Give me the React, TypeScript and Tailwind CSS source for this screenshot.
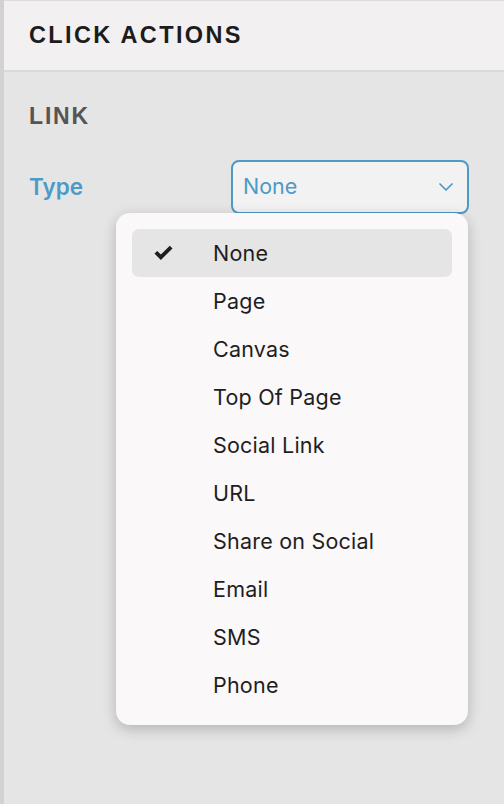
import { ChevronDown } from "lucide-react";

const OPTIONS = ["None", "Page", "Canvas", "Top Of Page", "Social Link", "URL", "Share on Social", "Email", "SMS", "Phone"];

export default function App() {
  const selected = "None";

  return (
    <main className="flex h-[804px] w-[504px] overflow-hidden bg-[#e5e5e5] font-['Inter',sans-serif]">
      <div className="w-[4px] shrink-0 bg-[#d2d2d2]" />
      <div className="relative flex min-w-0 flex-1 flex-col">
        <header className="flex h-[72px] items-center border-t border-b-2 border-t-[#dcdcdc] border-b-[#d9d9d9] bg-[#f2f0f1] px-[25px]">
          <h1 className="font-['Liberation_Sans',Arial,sans-serif] text-[23.5px] font-bold tracking-[0.1em] text-[#1c1c1c]">
            CLICK ACTIONS
          </h1>
        </header>

        <section className="px-[25px] pt-[27px]">
          <h2 className="font-['Liberation_Sans',Arial,sans-serif] text-[23px] font-bold tracking-[0.08em] text-[#555555]">
            LINK
          </h2>
          <div className="mt-[26px] flex items-center justify-between pr-[10px]">
            <span className="text-[22.5px] font-semibold text-[#4d9ac6]">Type</span>
            <button
              className="flex h-[54px] w-[238px] items-center justify-between rounded-[8px] border-2 border-[#4d9ac6] bg-[#f2f2f2] pl-[10px] pr-[9px] text-[21.5px] text-[#4d9ac6]"
              type="button"
            >
              <span>None</span>
              <ChevronDown size={24} strokeWidth={1.75} />
            </button>
          </div>
        </section>

        <div className="absolute left-[112px] top-[213px] w-[352px] rounded-[14px] bg-[#faf8f9] px-[16px] py-[16px] shadow-[0_4px_14px_rgba(0,0,0,0.22)]">
          {OPTIONS.map((option) => (
            <div
              className={`flex h-[48px] items-center rounded-[7px] text-[21.5px] tracking-[0.01em] text-[#1e1e1e] ${
                option === selected ? "bg-[#e5e5e5]" : ""
              }`}
              key={option}
            >
              <span className="flex w-[81px] pl-[22px]">
                {option === selected ? (
                  <svg width="19" height="16" viewBox="0 0 19 16" fill="#1e1e1e">
                    <path d="M0.5 8.6 L3.2 5.9 L6.9 9.6 L15.8 0.7 L18.5 3.4 L6.9 15 Z" />
                  </svg>
                ) : null}
              </span>
              <span>{option}</span>
            </div>
          ))}
        </div>
      </div>
    </main>
  );
}
